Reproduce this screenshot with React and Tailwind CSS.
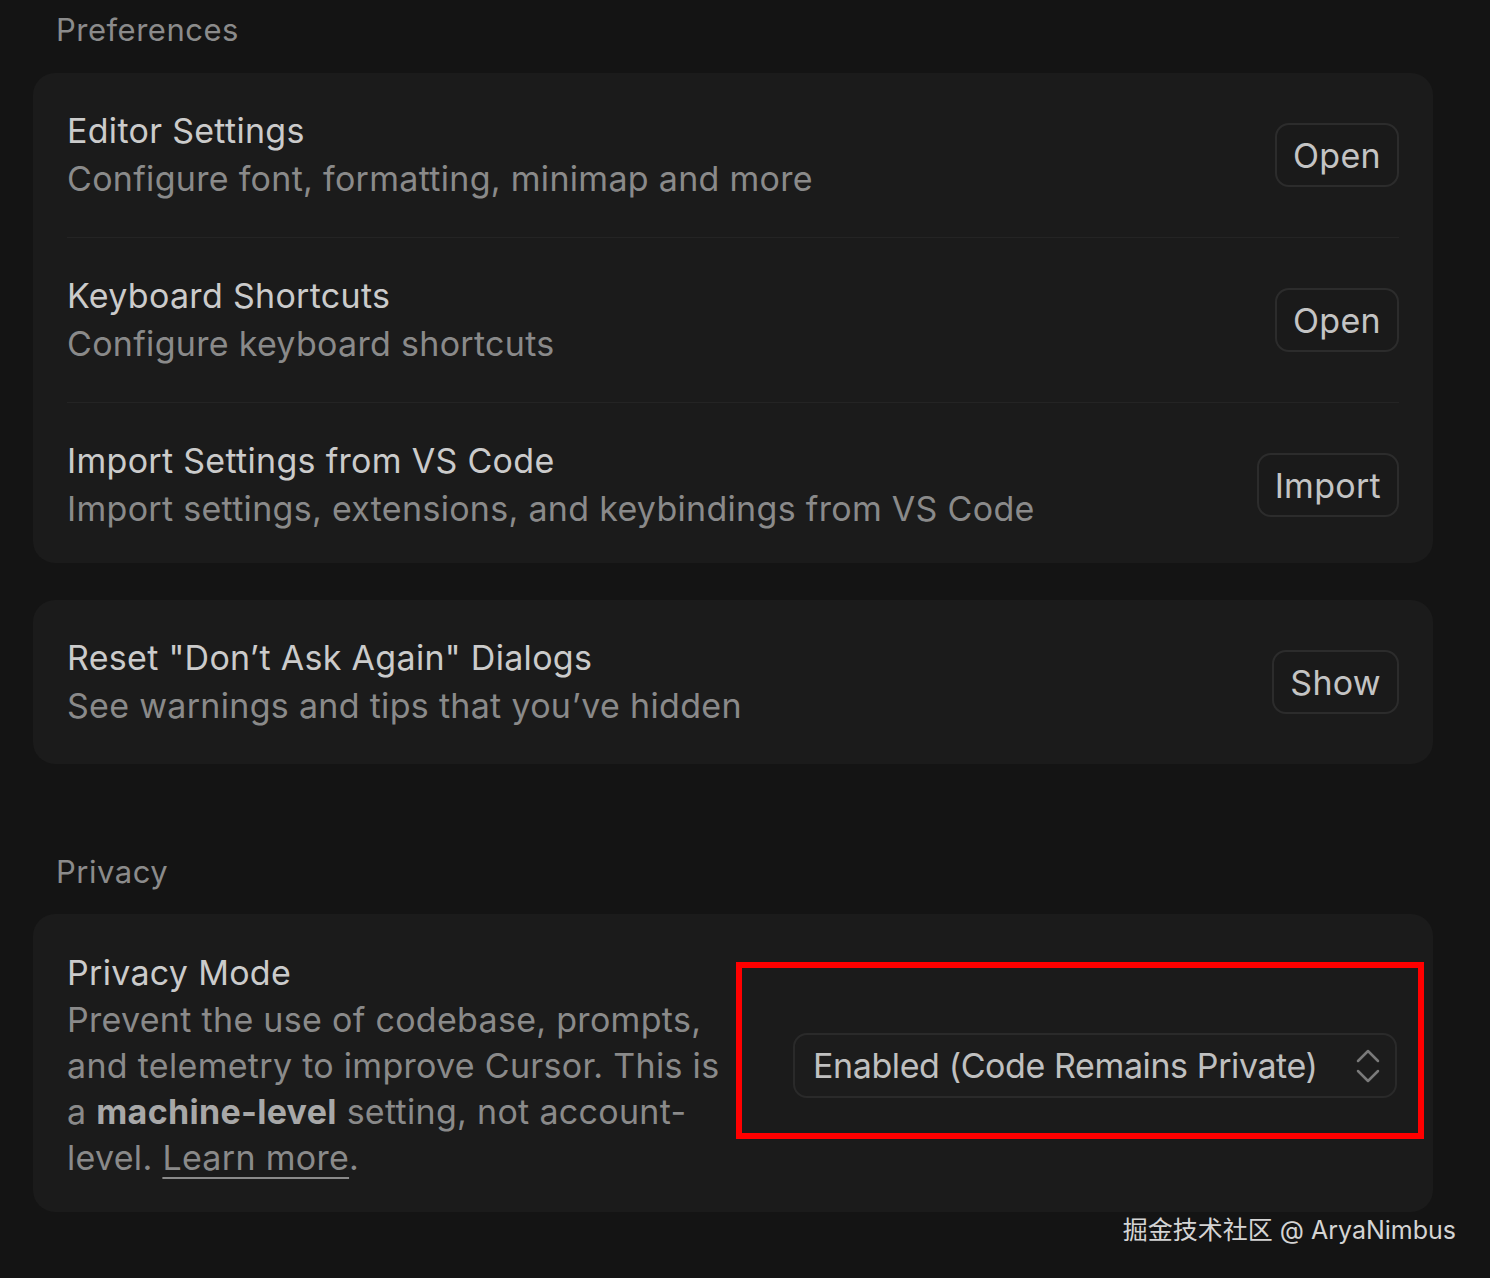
import React from 'react';

const font = { fontFamily: 'Inter, "Noto Sans CJK SC", sans-serif' };

function Row({ title, desc, action, divider, last }) {
  return (
    <div className={`flex items-center justify-between pt-[34px] ${last ? 'pb-[30px]' : 'pb-[34px]'} ${divider ? 'border-b border-[#242424]' : ''}`}>
      <div className="flex flex-col tracking-[0.3px]">
        <div className="text-[34px] leading-[48px] text-[#cbcbcb]">{title}</div>
        <div className="text-[34px] leading-[48px] text-[#8a8a8a]">{desc}</div>
      </div>
      <button className="h-[64px] px-[16px] rounded-[14px] border-2 border-[#2c2c2c] text-[34px] text-[#c4c4c4] bg-[#1a1a1a] tracking-[0.3px]">
        {action}
      </button>
    </div>
  );
}

export default function App() {
  return (
    <div className="w-[1490px] h-[1278px] bg-[#141414] overflow-hidden relative" style={font}>
      <div className="pl-[33px] pr-[57px]">
        <div className="pl-[23px] pt-[10px] pb-[23px] text-[31px] leading-[40px] text-[#8b8b8b] tracking-[0.5px]">Preferences</div>

        <div className="bg-[#1b1b1b] rounded-[22px] px-[34px]">
          <Row divider title="Editor Settings" desc="Configure font, formatting, minimap and more" action="Open" />
          <Row divider title="Keyboard Shortcuts" desc="Configure keyboard shortcuts" action="Open" />
          <Row last title="Import Settings from VS Code" desc="Import settings, extensions, and keybindings from VS Code" action="Import" />
        </div>

        <div className="mt-[37px] bg-[#1b1b1b] rounded-[22px] px-[34px]">
          <Row title={'Reset "Don\u2019t Ask Again" Dialogs'} desc={'See warnings and tips that you\u2019ve hidden'} action="Show" />
        </div>

        <div className="pl-[23px] pt-[88px] pb-[22px] text-[31px] leading-[40px] text-[#8b8b8b] tracking-[0.5px]">Privacy</div>

        <div className="bg-[#1b1b1b] rounded-[22px] pl-[34px] pr-[9px] pt-[35px] pb-[31px] flex">
          <div className="w-[655px] shrink-0 flex flex-col tracking-[0.3px]">
            <div className="text-[34px] leading-[48px] text-[#cbcbcb]">Privacy Mode</div>
            <p className="text-[34px] leading-[46px] text-[#8a8a8a]">
              Prevent the use of codebase, prompts, and telemetry to improve Cursor. This is a{' '}
              <b className="font-bold text-[#a8a8a8]">machine-level</b> setting, not account-level.{' '}
              <a className="underline underline-offset-[7px] decoration-2">Learn more</a>.
            </p>
          </div>
          <div className="ml-[14px] mt-[13px] self-start w-[688px] h-[177px] border-[6px] border-[#ff0000] pl-[51px] pr-[21px] pt-[65px]">
            <div className="h-[65px] rounded-[14px] border-2 border-[#2a2a2a] bg-[#1c1c1c] flex items-center justify-between pl-[18px] pr-[14px]">
              <span className="text-[34px] text-[#c0c0c0] tracking-[-0.4px]">Enabled (Code Remains Private)</span>
              <svg width="26" height="36" viewBox="0 0 26 36" fill="none" stroke="#7a7a7a" strokeWidth="2.5" strokeLinecap="round" strokeLinejoin="round">
                <path d="M3 13 L13 3 L23 13" />
                <path d="M3 23 L13 33 L23 23" />
              </svg>
            </div>
          </div>
        </div>
      </div>

      <div className="absolute right-[34px] top-[1211px] text-[25px] leading-[38px] text-[#d4d4d4]">
        掘金技术社区 @ AryaNimbus
      </div>
    </div>
  );
}
